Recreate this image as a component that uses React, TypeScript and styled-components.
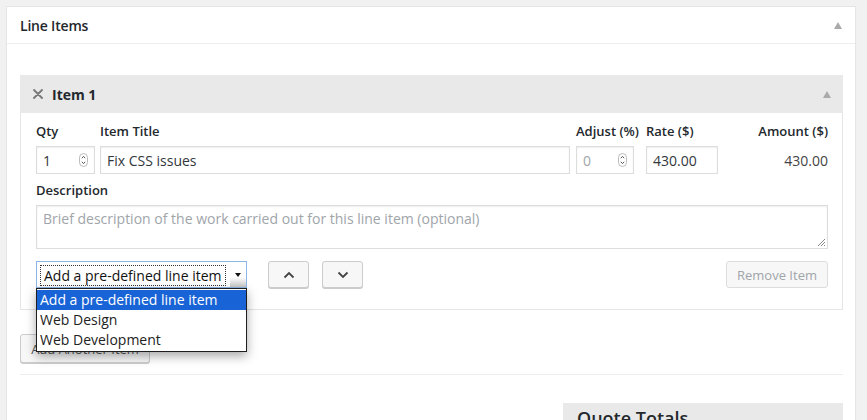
import React from "react";
import styled, { createGlobalStyle } from "styled-components";

const Global = createGlobalStyle`
  html, body { margin: 0; padding: 0; background: #f1f1f1; }
  body { font-family: "Open Sans", "Noto Sans", sans-serif; color: #32373c; overflow: hidden; }
  * { box-sizing: border-box; }
`;

const Page = styled.div`
  padding: 6px 11px 0 6px;
  height: 420px;
  overflow: hidden;
`;

const Panel = styled.section`
  background: #fff;
  border: 1px solid #e5e5e5;
  box-shadow: 0 1px 1px rgba(0,0,0,0.04);
  min-height: 500px;
`;

const PanelHead = styled.header`
  height: 37px;
  display: flex;
  align-items: center;
  justify-content: space-between;
  padding: 0 13px 0 13px;
  border-bottom: 1px solid #eee;
  font-size: 14px;
  font-weight: 600;
  color: #23282d;
  letter-spacing: -0.2px;
`;

const Toggle = styled.span`
  width: 0;
  height: 0;
  border-left: 4px solid transparent;
  border-right: 4px solid transparent;
  border-bottom: 7px solid #aaa;
`;

const PanelBody = styled.div`
  padding: 31px 12px 0 13px;
`;

const Item = styled.div`
  border: 1px solid #e5e5e5;
`;

const ItemHead = styled.div`
  height: 38px;
  background: #e9e9e9;
  display: flex;
  align-items: center;
  padding: 0 12px 0 13px;
  margin: -1px -1px 0 -1px;
  font-size: 14px;
  font-weight: 700;
  color: #23282d;
`;

const ItemTitle = styled.span`
  flex: 1;
  margin-left: 9px;
`;

const ItemBody = styled.div`
  padding: 9px 14px 21px 15px;
  display: flex;
  flex-direction: column;
`;

const FieldRow = styled.div`
  display: flex;
  align-items: flex-start;
`;

const Field = styled.div<{ $w?: number; $grow?: boolean; $ml?: number; $right?: boolean }>`
  display: flex;
  flex-direction: column;
  width: ${(p) => (p.$w ? `${p.$w}px` : "auto")};
  flex: ${(p) => (p.$grow ? "1" : "none")};
  margin-left: ${(p) => p.$ml ?? 0}px;
  align-items: ${(p) => (p.$right ? "flex-end" : "stretch")};
`;

const Label = styled.label`
  font-size: 13px;
  font-weight: 600;
  color: #23282d;
  line-height: 18px;
  height: 18px;
  margin-bottom: 6px;
  white-space: nowrap;
`;

const InputBox = styled.div<{ $muted?: boolean }>`
  height: 28px;
  border: 1px solid #ddd;
  box-shadow: inset 0 1px 2px rgba(0,0,0,0.07);
  background: #fff;
  display: flex;
  align-items: center;
  padding: 0 6px 0 6px;
  font-size: 14px;
  color: ${(p) => (p.$muted ? "#a0a5aa" : "#32373c")};
`;

const InputText = styled.span`
  flex: 1;
  white-space: nowrap;
`;

const Amount = styled.div`
  height: 28px;
  display: flex;
  align-items: center;
  font-size: 14px;
  color: #444;
`;

const DescLabel = styled(Label)`
  margin-top: 7px;
  margin-bottom: 6px;
`;

const TextArea = styled.div`
  height: 44px;
  border: 1px solid #ddd;
  box-shadow: inset 0 1px 2px rgba(0,0,0,0.07);
  padding: 3px 6px;
  font-size: 14px;
  color: #a0a5aa;
  position: relative;
`;

const Grip = styled.svg`
  position: absolute;
  right: 1px;
  bottom: 1px;
`;

const Actions = styled.div`
  display: flex;
  align-items: center;
  margin-top: 12px;
`;

const SelectWrap = styled.div`
  position: relative;
  width: 211px;
`;

const Select = styled.div`
  height: 27px;
  border: 1px solid #8db6e8;
  background: #fff;
  display: flex;
  align-items: center;
  padding: 2px 0 0 3px;
  font-size: 14px;
  color: #111;
`;

const FocusText = styled.span`
  border: 1px dotted #333;
  padding: 0 3px;
  line-height: 19px;
  white-space: nowrap;
`;

const SelectArrow = styled.span`
  margin-left: auto;
  width: 16px;
  align-self: stretch;
  display: flex;
  align-items: center;
  justify-content: center;
  background: linear-gradient(to bottom, #fff 0%, #fff 60%, #c8c8c8 100%);
  margin-top: -2px;
  &::after {
    content: "";
    border-left: 3px solid transparent;
    border-right: 3px solid transparent;
    border-top: 4px solid #111;
  }
`;

const Options = styled.ul`
  position: absolute;
  z-index: 5;
  top: 27px;
  left: 0;
  width: 211px;
  margin: 0;
  padding: 1px 0;
  list-style: none;
  background: #fff;
  border: 1px solid #1e1e1e;
  box-shadow: 0 4px 10px rgba(0,0,0,0.35);
`;

const Option = styled.li<{ $active?: boolean }>`
  height: 20px;
  line-height: 20px;
  padding: 0 3px;
  font-size: 14px;
  white-space: nowrap;
  background: ${(p) => (p.$active ? "#1863d6" : "transparent")};
  color: ${(p) => (p.$active ? "#fff" : "#222")};
`;

const Button = styled.button<{ $w?: number; $ml?: number; $muted?: boolean }>`
  height: 27px;
  width: ${(p) => (p.$w ? `${p.$w}px` : "auto")};
  margin-left: ${(p) => p.$ml ?? 0}px;
  border: 1px solid #ccc;
  border-radius: 3px;
  background: #f7f7f7;
  box-shadow: 0 1px 0 #ccc;
  font-family: "Open Sans", "Noto Sans", sans-serif;
  font-size: 13px;
  color: ${(p) => (p.$muted ? "#a0a5aa" : "#555")};
  padding: 0 10px;
  display: inline-flex;
  align-items: center;
  justify-content: center;
`;

const MutedButton = styled(Button)`
  margin-left: auto;
  border-color: #ddd;
  box-shadow: none;
  background: #f7f7f7;
`;

const AddRow = styled.div`
  margin-top: 24px;
  display: flex;
`;

const AddButton = styled(Button)`
  height: 29px;
  width: 130px;
  color: #555;
  font-size: 13px;
  padding: 0;
`;

const Separator = styled.hr`
  border: 0;
  border-top: 1px solid #eee;
  margin: 11px 0 0 0;
`;

const TotalsRow = styled.div`
  display: flex;
  justify-content: flex-end;
  margin-top: 28px;
`;

const Totals = styled.div`
  width: 280px;
  background: #e9e9e9;
  padding: 3px 14px;
  font-size: 18px;
  font-weight: 600;
  color: #23282d;
  height: 60px;
`;

const Spinner = () => (
  <svg width="9" height="14" viewBox="0 0 9 14">
    <rect x="0.5" y="0.5" width="8" height="13" rx="4" fill="#fff" stroke="#bbb" />
    <path d="M2.8 5.2 L4.5 3.4 L6.2 5.2" fill="none" stroke="#555" strokeWidth="1" />
    <path d="M2.8 8.8 L4.5 10.6 L6.2 8.8" fill="none" stroke="#555" strokeWidth="1" />
  </svg>
);

const Close = () => (
  <svg width="10" height="10" viewBox="0 0 10 10">
    <path d="M1 1 L9 9 M9 1 L1 9" stroke="#777" strokeWidth="1.8" strokeLinecap="round" />
  </svg>
);

const Chevron = ({ up }: { up?: boolean }) => (
  <svg width="12" height="8" viewBox="0 0 12 8">
    <path
      d={up ? "M1.5 6.5 L6 2 L10.5 6.5" : "M1.5 1.5 L6 6 L10.5 1.5"}
      fill="none"
      stroke="#444"
      strokeWidth="1.8"
    />
  </svg>
);

export default function App() {
  return (
    <>
      <Global />
      <Page>
        <Panel>
          <PanelHead>
            <span>Line Items</span>
            <Toggle />
          </PanelHead>
          <PanelBody>
            <Item>
              <ItemHead>
                <Close />
                <ItemTitle>Item 1</ItemTitle>
                <Toggle />
              </ItemHead>
              <ItemBody>
                <FieldRow>
                  <Field $w={59}>
                    <Label>Qty</Label>
                    <InputBox>
                      <InputText>1</InputText>
                      <Spinner />
                    </InputBox>
                  </Field>
                  <Field $grow $ml={5}>
                    <Label>Item Title</Label>
                    <InputBox>
                      <InputText>Fix CSS issues</InputText>
                    </InputBox>
                  </Field>
                  <Field $w={58} $ml={6}>
                    <Label>Adjust (%)</Label>
                    <InputBox $muted>
                      <InputText>0</InputText>
                      <Spinner />
                    </InputBox>
                  </Field>
                  <Field $w={72} $ml={12}>
                    <Label>Rate ($)</Label>
                    <InputBox>
                      <InputText>430.00</InputText>
                    </InputBox>
                  </Field>
                  <Field $w={110} $right>
                    <Label>Amount ($)</Label>
                    <Amount>430.00</Amount>
                  </Field>
                </FieldRow>
                <DescLabel>Description</DescLabel>
                <TextArea>
                  Brief description of the work carried out for this line item (optional)
                  <Grip width="9" height="9" viewBox="0 0 9 9">
                    <path d="M8 1 L1 8 M8 4 L4 8 M8 7 L7 8" stroke="#888" strokeWidth="1" />
                  </Grip>
                </TextArea>
                <Actions>
                  <SelectWrap>
                    <Select>
                      <FocusText>Add a pre-defined line item</FocusText>
                      <SelectArrow />
                    </Select>
                    <Options>
                      <Option $active>Add a pre-defined line item</Option>
                      <Option>Web Design</Option>
                      <Option>Web Development</Option>
                    </Options>
                  </SelectWrap>
                  <Button $w={41} $ml={21}>
                    <Chevron up />
                  </Button>
                  <Button $w={41} $ml={13}>
                    <Chevron />
                  </Button>
                  <MutedButton $muted $w={102}>Remove Item</MutedButton>
                </Actions>
              </ItemBody>
            </Item>
            <AddRow>
              <AddButton>Add Another Item</AddButton>
            </AddRow>
            <Separator />
            <TotalsRow>
              <Totals>Quote Totals</Totals>
            </TotalsRow>
          </PanelBody>
        </Panel>
      </Page>
    </>
  );
}
